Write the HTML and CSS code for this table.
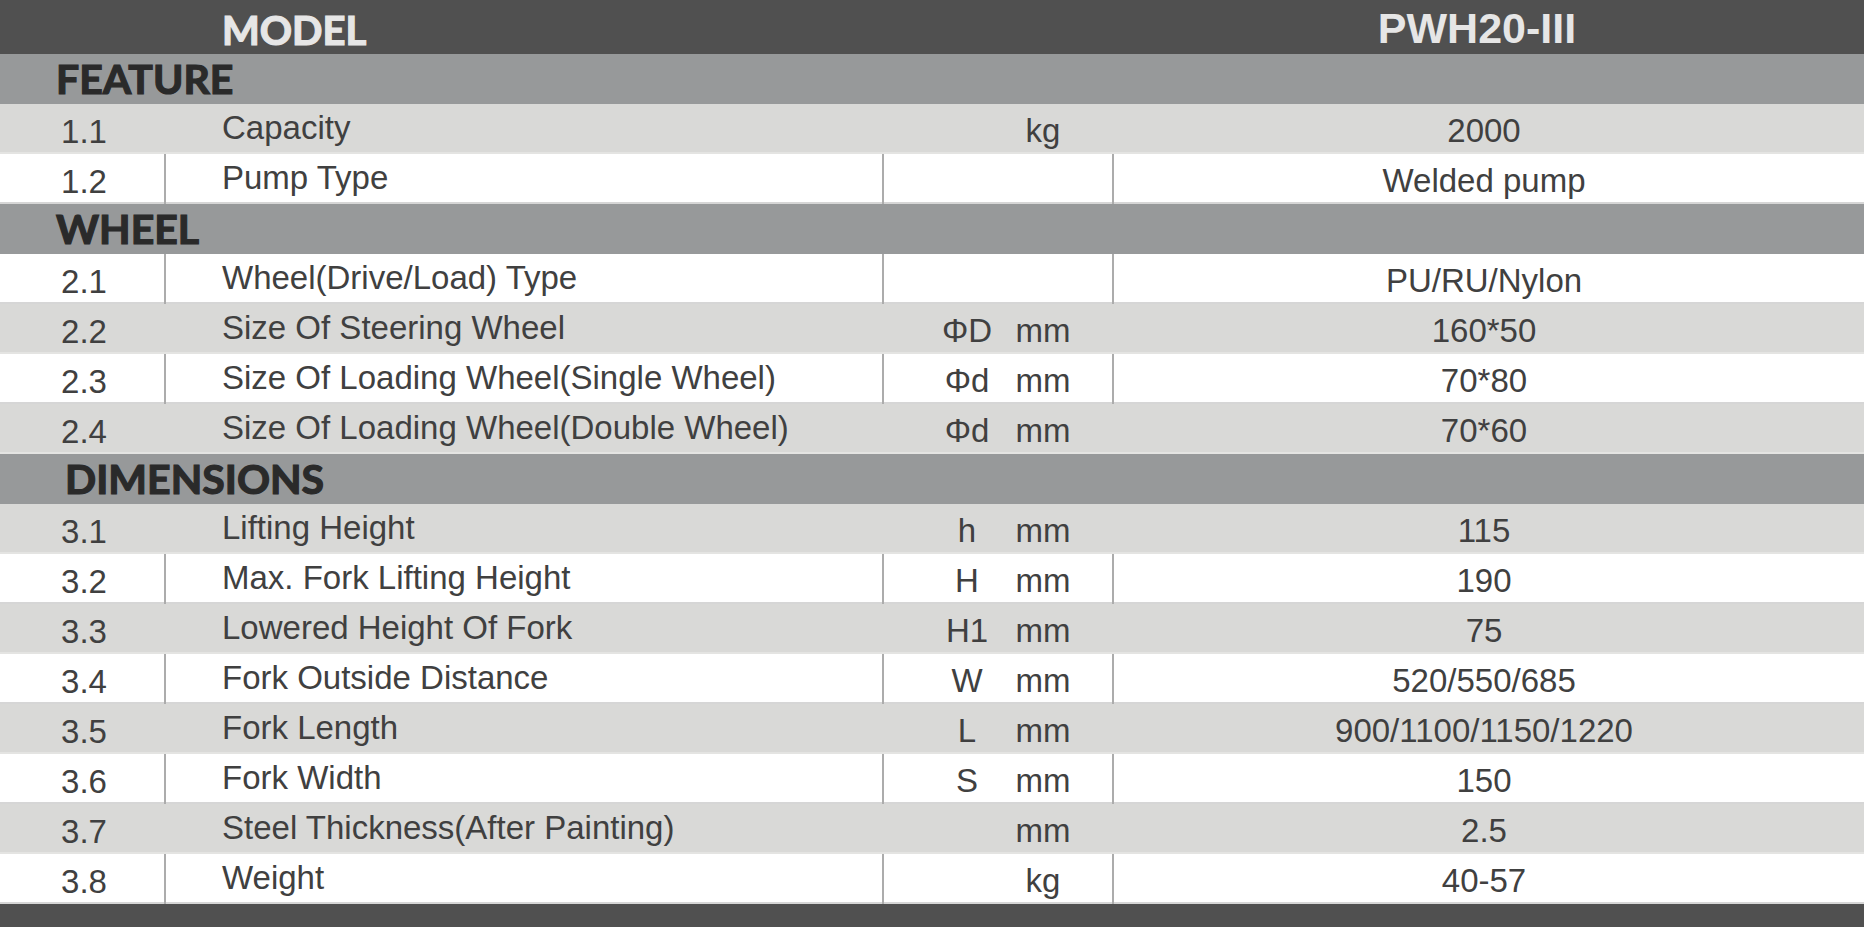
FILE: index.html
```html
<!DOCTYPE html>
<html>
<head>
<meta charset="utf-8">
<link rel="stylesheet" href="styles.css">
</head>
<body>
<div class="sheet">
  <div class="head">
    <div class="head-model">MODEL</div>
    <div class="head-name">PWH20-III</div>
  </div>

  <div class="section">FEATURE</div>
  <div class="row shade"><div class="num">1.1</div><div class="label">Capacity</div><div class="unit"><span class="sym"></span><span class="u">kg</span></div><div class="val">2000</div></div>
  <div class="row"><div class="num">1.2</div><div class="label">Pump Type</div><div class="unit"><span class="sym"></span><span class="u"></span></div><div class="val">Welded pump</div></div>

  <div class="section">WHEEL</div>
  <div class="row"><div class="num">2.1</div><div class="label">Wheel(Drive/Load) Type</div><div class="unit"><span class="sym"></span><span class="u"></span></div><div class="val">PU/RU/Nylon</div></div>
  <div class="row shade"><div class="num">2.2</div><div class="label">Size Of Steering Wheel</div><div class="unit"><span class="sym">ΦD</span><span class="u">mm</span></div><div class="val">160*50</div></div>
  <div class="row"><div class="num">2.3</div><div class="label">Size Of Loading Wheel(Single Wheel)</div><div class="unit"><span class="sym">Φd</span><span class="u">mm</span></div><div class="val">70*80</div></div>
  <div class="row shade"><div class="num">2.4</div><div class="label">Size Of Loading Wheel(Double Wheel)</div><div class="unit"><span class="sym">Φd</span><span class="u">mm</span></div><div class="val">70*60</div></div>

  <div class="section section-wide">DIMENSIONS</div>
  <div class="row shade"><div class="num">3.1</div><div class="label">Lifting Height</div><div class="unit"><span class="sym">h</span><span class="u">mm</span></div><div class="val">115</div></div>
  <div class="row"><div class="num">3.2</div><div class="label">Max. Fork Lifting Height</div><div class="unit"><span class="sym">H</span><span class="u">mm</span></div><div class="val">190</div></div>
  <div class="row shade"><div class="num">3.3</div><div class="label">Lowered Height Of Fork</div><div class="unit"><span class="sym">H1</span><span class="u">mm</span></div><div class="val">75</div></div>
  <div class="row"><div class="num">3.4</div><div class="label">Fork Outside Distance</div><div class="unit"><span class="sym">W</span><span class="u">mm</span></div><div class="val">520/550/685</div></div>
  <div class="row shade"><div class="num">3.5</div><div class="label">Fork Length</div><div class="unit"><span class="sym">L</span><span class="u">mm</span></div><div class="val">900/1100/1150/1220</div></div>
  <div class="row"><div class="num">3.6</div><div class="label">Fork Width</div><div class="unit"><span class="sym">S</span><span class="u">mm</span></div><div class="val">150</div></div>
  <div class="row shade"><div class="num">3.7</div><div class="label">Steel Thickness(After Painting)</div><div class="unit"><span class="sym"></span><span class="u">mm</span></div><div class="val">2.5</div></div>
  <div class="row"><div class="num">3.8</div><div class="label">Weight</div><div class="unit"><span class="sym"></span><span class="u">kg</span></div><div class="val">40-57</div></div>

  <div class="foot"></div>
</div>
</body>
</html>
```

FILE: styles.css
```css
html, body {
  margin: 0;
  padding: 0;
  background: #ffffff;
}

.sheet {
  width: 1864px;
  height: 927px;
  overflow: hidden;
  font-family: "Liberation Sans", Arial, sans-serif;
  color: #404040;
}

.head {
  height: 54px;
  background: #505050;
  display: grid;
  grid-template-columns: 1112px 1fr;
  color: #e6e6e6;
}

.head-model {
  font-family: Lato, "Open Sans", sans-serif;
  font-weight: 700;
  font-size: 40px;
  line-height: 48px;
  padding-top: 6px;
  padding-left: 222px;
  letter-spacing: 0;
  -webkit-text-stroke: 1.2px #e6e6e6;
}

.head-name {
  font-family: "Liberation Sans", Arial, sans-serif;
  font-weight: 700;
  font-size: 43px;
  line-height: 52px;
  padding-top: 2px;
  text-align: center;
  padding-right: 22px;
}

.section {
  height: 50px;
  background: #97999a;
  font-family: Lato, "Open Sans", sans-serif;
  font-weight: 700;
  font-size: 41px;
  line-height: 50px;
  color: #2a2a2a;
  padding-left: 56px;
  letter-spacing: 0;
  -webkit-text-stroke: 1.2px #2a2a2a;
}

.section-wide {
  padding-left: 65px;
}

.row {
  height: 50px;
  display: grid;
  grid-template-columns: 164px 718px 230px 1fr;
  background: #ffffff;
  font-size: 33px;
  overflow: hidden;
  box-shadow: inset 0 -2px 0 #d6d6d6;
}

.row.shade {
  background: #d9d9d7;
  box-shadow: inset 0 -2px 0 #e4e4e2;
}

.row > div {
  height: 50px;
  box-sizing: border-box;
  white-space: nowrap;
}

.label,
.unit,
.val {
  border-left: 2px solid #acacac;
}

.row.shade .label,
.row.shade .unit,
.row.shade .val {
  border-left-color: transparent;
}

.num {
  text-align: center;
  padding-left: 4px;
  padding-top: 6px;
  line-height: 44px;
}

.label {
  padding-left: 56px;
  line-height: 47px;
}

.unit {
  display: flex;
  padding-left: 53px;
  padding-top: 3px;
  line-height: 47px;
}

.sym {
  width: 60px;
  text-align: center;
}

.u {
  width: 60px;
  margin-left: 16px;
  text-align: center;
}

.val {
  text-align: center;
  padding-right: 10px;
  padding-top: 3px;
  line-height: 47px;
}

.foot {
  height: 23px;
  background: #505050;
}
```
